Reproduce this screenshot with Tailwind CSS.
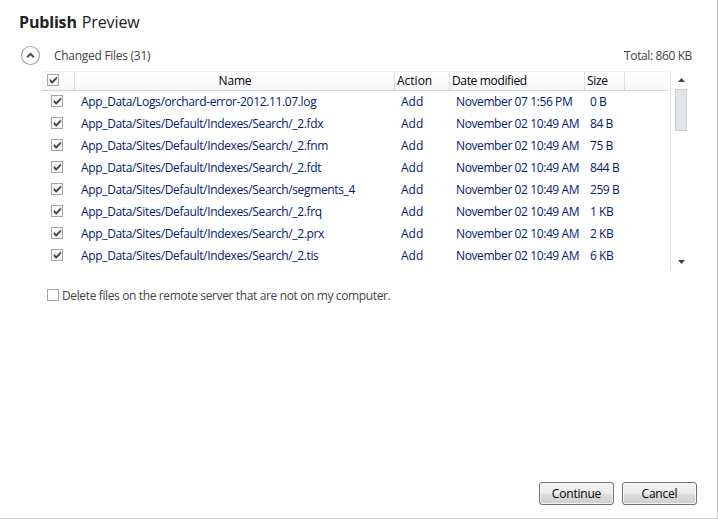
<!DOCTYPE html>
<html lang="en">
<head>
<meta charset="utf-8">
<title>Publish Preview</title>
<script src="https://cdn.jsdelivr.net/npm/@tailwindcss/browser@4"></script>
</head>
<body class="bg-white">
<svg class="hidden">
  <symbol id="box" viewBox="0 0 12 12"><rect x=".5" y=".5" width="11" height="11" fill="#fdfdfd" stroke="#a3a5a6"/></symbol>
  <symbol id="check" viewBox="0 0 12 12"><rect x=".5" y=".5" width="11" height="11" fill="#f8f8f8" stroke="#a3a5a6"/><path d="M3 5.2V7.4L5.2 9.6 9.8 4.8V2.8L5.2 7.2z" fill="#3a3d40" stroke="#3a3d40" stroke-width=".4"/></symbol>
</svg>
<div class="w-[718px] h-[519px] flex flex-col border-r border-b border-[#cfcfcf] bg-white overflow-hidden whitespace-nowrap text-[12px] leading-[16px] text-[#444] font-['Open_Sans','Noto_Sans',sans-serif]">
  <h1 class="mt-[10px] ml-[19px] h-6 flex gap-[5px] text-[16px] leading-6 text-[#222]"><b class="tracking-[-0.17px]">Publish</b><span class="tracking-[-0.1px]">Preview</span></h1>
  <div class="mt-[11px] h-[21px] flex items-center pl-5">
    <svg class="w-[21px] h-[21px]" viewBox="0 0 21 21" fill="none"><circle cx="10.5" cy="10.5" r="9" stroke="#a0a0a0" stroke-width="1.1"/><path d="M7.1 12.3 10.5 9l3.4 3.3" stroke="#505050" stroke-width="2"/></svg>
    <span class="ml-[13px] pt-px tracking-[-0.28px]">Changed Files (31)</span>
    <span class="ml-auto mr-[25px] pt-px tracking-[-0.38px]">Total: 860 KB</span>
  </div>
  <div class="mt-[5px] ml-[42px] h-[200px] flex">
    <div class="w-[626px] text-[#001a7a]">
      <div class="h-5 grid grid-cols-[33px_320px_55px_135px_40px_43px] border-t border-b border-t-[#f0f0f0] border-b-[#d0d2d4] bg-linear-to-b from-white to-[#f6f7f8] text-black leading-[18px]">
        <div class="border-r border-[#dcdedf] pl-[5px] pt-[2px]"><svg class="w-3 h-3"><use href="#check"/></svg></div>
        <div class="border-r border-[#dcdedf] text-center pl-px tracking-[-0.2px]">Name</div>
        <div class="border-r border-[#dcdedf] pl-[2px]">Action</div>
        <div class="border-r border-[#dcdedf] pl-[2px] tracking-[-0.35px]">Date modified</div>
        <div class="border-r border-[#dcdedf] pl-[2px] tracking-[-0.3px]">Size</div>
        <div></div>
      </div>
      <div id="rows"></div>
    </div>
    <div class="w-px ml-[2px] bg-[#dfdfdf]"></div>
    <div class="ml-1 w-3 flex flex-col items-center">
      <svg class="mt-[7px] w-[7px] h-1 shrink-0"><path d="M0 4 3.5 0 7 4z" fill="#444"/></svg>
      <div class="mt-[7px] w-3 h-[42px] border border-[#c9ced2] bg-[#e1e5e8]"></div>
      <svg class="mt-auto mb-[7px] w-[7px] h-1 shrink-0"><path d="M0 0 3.5 4 7 0z" fill="#444"/></svg>
    </div>
  </div>
  <div class="mt-[17px] ml-[47px] flex"><svg class="mt-[1px] w-3 h-3"><use href="#box"/></svg><span class="ml-[3px] tracking-[-0.37px]">Delete files on the remote server that are not on my computer.</span></div>
  <div class="mt-auto mb-[13px] mr-5 flex justify-end gap-2 text-black tracking-[-0.2px]">
    <button class="w-[75px] h-[23px] rounded-[3px] border border-[#707070] bg-[linear-gradient(#f2f2f2,#ebebeb_50%,#dddddd_50%,#cfcfcf)] shadow-[inset_0_0_0_1px_#fafafacc]">Continue</button>
    <button class="w-[75px] h-[23px] rounded-[3px] border border-[#707070] bg-[linear-gradient(#f2f2f2,#ebebeb_50%,#dddddd_50%,#cfcfcf)] shadow-[inset_0_0_0_1px_#fafafacc]">Cancel</button>
  </div>
</div>
<script>
const base = 'App_Data/Sites/Default/Indexes/Search/';
const files = [
  ['App_Data/Logs/orchard-error-2012.11.07.log', '07 1:56 PM', '0 B'],
  [base + '_2.fdx', '02 10:49 AM', '84 B'],
  [base + '_2.fnm', '02 10:49 AM', '75 B'],
  [base + '_2.fdt', '02 10:49 AM', '844 B'],
  [base + 'segments_4', '02 10:49 AM', '259 B'],
  [base + '_2.frq', '02 10:49 AM', '1 KB'],
  [base + '_2.prx', '02 10:49 AM', '2 KB'],
  [base + '_2.tis', '02 10:49 AM', '6 KB']
];
document.getElementById('rows').innerHTML = files.map(([name, date, size]) => `
  <div class="h-[22px] leading-[22px] grid grid-cols-[39px_320px_55px_134px_78px]">
    <div class="pl-[9px] pt-[4px]"><svg class="w-3 h-3"><use href="#check"/></svg></div>
    <div class="tracking-[-0.35px]">${name}</div><div>Add</div>
    <div class="tracking-[-0.4px]">November ${date}</div><div class="tracking-[-0.45px]">${size}</div>
  </div>`).join('');
</script>
</body>
</html>
